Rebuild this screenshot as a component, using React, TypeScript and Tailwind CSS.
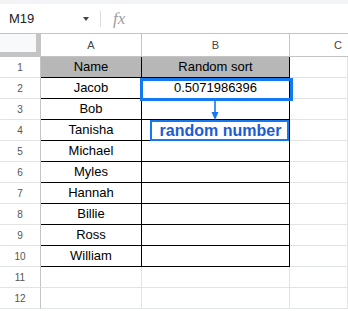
const names = ["Jacob", "Bob", "Tanisha", "Michael", "Myles", "Hannah", "Billie", "Ross", "William"];

const font = { fontFamily: '"Liberation Sans", Arial, sans-serif' };

function Row({ n }: { n: number }) {
  const inTable = n <= 10;
  const header = n === 1;
  const line = inTable ? "border-black" : "border-[#e2e3e3]";
  const a = header ? "Name" : n <= 10 ? names[n - 2] : "";
  const b = header ? "Random sort" : n === 2 ? "0.5071986396" : "";
  return (
    <div className="flex h-[21px]">
      <div className="flex w-[41px] shrink-0 items-center justify-center border-r border-b border-r-[#c4c4c4] border-b-[#e2e3e3] text-[10px] text-[#555]">
        {n}
      </div>
      <div
        className={`flex w-[101px] shrink-0 items-center justify-center border-r border-b text-[13px] text-black ${line} ${header ? "bg-[#b7b7b7]" : ""}`}
      >
        {a}
      </div>
      <div
        className={`flex w-[148px] shrink-0 items-center justify-center border-r border-b text-[13px] text-black ${line} ${header ? "bg-[#b7b7b7]" : ""}`}
      >
        {b}
      </div>
      <div className="flex-1 border-r border-b border-[#e2e3e3]" />
    </div>
  );
}

export default function App() {
  const rows = Array.from({ length: 12 }, (_, i) => i + 1);
  return (
    <div className="relative h-[311px] w-[348px] overflow-hidden bg-white" style={font}>
      {/* formula bar */}
      <div className="h-[34px] border-b border-[#c4c4c4]">
        <div className="h-[4px] bg-[#f3f4f5]" />
        <div className="flex h-[29px] items-center">
          <span className="ml-[9px] w-[74px] text-[13px] text-[#202124]">M19</span>
          <span className="h-0 w-0 border-x-[3.5px] border-t-[4px] border-x-transparent border-t-[#444]" />
          <span className="ml-[11px] h-[16px] w-px bg-[#dadce0]" />
          <span
            className="ml-[12px] text-[17px] italic text-[#9aa0a6]"
            style={{ fontFamily: '"Liberation Serif", serif' }}
          >
            fx
          </span>
        </div>
      </div>

      {/* column headers */}
      <div className="flex h-[23px] text-[11px] text-[#444]">
        <div className="w-[41px] shrink-0 border-r-[5px] border-b-[5px] border-[#c4c4c4] bg-[#f8f9fa]" />
        <div className="flex w-[101px] shrink-0 items-center justify-center border-r border-b border-[#c4c4c4]">A</div>
        <div className="flex w-[148px] shrink-0 items-center justify-center border-r border-b border-[#c4c4c4]">B</div>
        <div className="flex flex-1 items-center justify-center border-b border-[#c4c4c4] pl-[38px]">C</div>
      </div>

      {rows.map((n) => (
        <Row key={n} n={n} />
      ))}

      {/* selection highlight on B2 */}
      <div className="absolute left-[140px] top-[78px] h-[23px] w-[153px] border-[3px] border-[#1479f0]" />

      {/* arrow */}
      <svg className="absolute left-[209px] top-[101px]" width="12" height="20" viewBox="0 0 12 20">
        <line x1="6" y1="0" x2="6" y2="12" stroke="#1479f0" strokeWidth="1.6" />
        <path d="M2.5 11 L9.5 11 L6 19 Z" fill="#1479f0" />
      </svg>

      {/* callout */}
      <div className="absolute left-[150px] top-[120px] flex h-[21px] w-[139px] items-center justify-center border-2 border-[#1479f0] bg-white pl-[2px] text-[16px] font-bold text-[#1b5cd4]">
        random number
      </div>
    </div>
  );
}
